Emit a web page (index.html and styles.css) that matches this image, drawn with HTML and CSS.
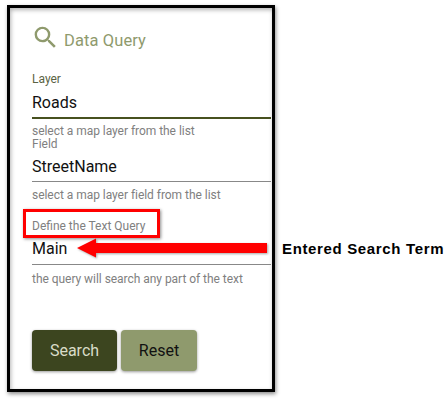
FILE: index.html
```html
<!DOCTYPE html>
<html lang="en">
<head>
<meta charset="utf-8">
<title>Data Query</title>
<link rel="stylesheet" href="styles.css">
</head>
<body>
<div class="stage">
  <section class="card">
    <header class="title">
      <svg class="search-icon" viewBox="0 0 24 24" width="29" height="29" aria-hidden="true"><path d="M15.5 14h-.79l-.28-.27A6.47 6.47 0 0 0 16 9.500 6.500 6.500 0 1 0 9.500 16c1.610 0 3.090-.59 4.230-1.570l.27.28v.79l5 4.990L20.490 19l-4.990-5zm-6 0C7.010 14 5 11.990 5 9.500S7.010 5 9.500 5 14 7.010 14 9.500 11.990 14 9.500 14z"/></svg>
      <h1>Data Query</h1>
    </header>
    <div class="field first">
      <div class="label label-active">Layer</div>
      <div class="value value-active">Roads</div>
      <div class="help">select a map layer from the list</div>
    </div>
    <div class="field second">
      <div class="label">Field</div>
      <div class="value">StreetName</div>
      <div class="help">select a map layer field from the list</div>
    </div>
    <div class="field third">
      <div class="label">Define the Text Query</div>
      <div class="value">Main</div>
      <div class="help">the query will search any part of the text</div>
    </div>
    <div class="actions">
      <button class="btn btn-primary" type="button">Search</button>
      <button class="btn btn-secondary" type="button">Reset</button>
    </div>
  </section>
  <div class="callout-box"></div>
  <svg class="callout-arrow" viewBox="0 0 192 22" width="192" height="22" aria-hidden="true"><path d="M0 11 19 1.500V6H190V16H19V20.500Z"/></svg>
  <div class="callout-text">Entered Search Term</div>
</div>
</body>
</html>
```
FILE: styles.css
```css
* { box-sizing: border-box; }
html, body { margin: 0; padding: 0; background: #fff; }
.stage { position: relative; width: 445px; height: 401px; overflow: hidden; padding: 5px 0 0 7px; }
.card {
  width: 268px; height: 387px;
  border: 3px solid #000;
  background: #fff;
  box-shadow: 1px 2px 4px rgba(0,0,0,.45), inset 1px 2px 4px rgba(0,0,0,.3);
  padding: 15px 3px 0 22px;
  font-family: Roboto, sans-serif;
}
.title { display: flex; align-items: flex-start; height: 40px; }
.search-icon { fill: #8f9a6d; margin-left: -1px; flex: none; }
.title h1 { margin: 6px 0 0 4px; font-size: 16.5px; line-height: 24px; font-weight: 400; color: #8f9a6d; letter-spacing: .1px; }
.field { width: 239px; }
.first { margin-top: 9px; }
.second { margin-top: -1px; }
.third { margin-top: 17px; }
.label { font-size: 12px; line-height: 14px; height: 14px; color: #808080; }
.label-active { color: #5a6344; }
.value {
  font-size: 16px; line-height: 24px; height: 31px; padding-top: 4px;
  color: #111;
  border-bottom: 1px solid #888;
}
.third .value { height: 32px; }
.value-active { height: 33px; padding-top: 5px; border-bottom: 2px solid #47511f; }
.help { font-size: 12px; line-height: 14px; color: #808080; letter-spacing: -.04px; }
.first .help { margin-top: 5px; }
.second .help { margin-top: 6px; }
.third .help { margin-top: 7px; }
.actions { display: flex; gap: 4px; margin-top: 44px; }
.btn {
  height: 41px; border: 0; border-radius: 4px; padding: 0;
  font-family: Roboto, sans-serif; font-size: 16px;
  box-shadow: 0 1px 3px rgba(0,0,0,.4);
}
.btn-primary { width: 85px; background: #3c451f; color: #d9dcc8; }
.btn-secondary { width: 76px; background: #8f9a6d; color: #111; }
.callout-box {
  position: absolute; left: 23px; top: 209px; width: 137px; height: 29px;
  border: 3px solid #f00;
  box-shadow: 1px 1px 3px rgba(0,0,0,.45);
}
.callout-arrow { position: absolute; left: 77px; top: 237px; fill: #f00; filter: drop-shadow(1px 1px 1px rgba(0,0,0,.35)); }
.callout-text {
  position: absolute; left: 282px; top: 240px;
  font-family: "Liberation Sans", Arial, sans-serif; font-size: 15px; font-weight: 700; line-height: 17px;
  letter-spacing: .65px; color: #000; white-space: nowrap;
}
```
